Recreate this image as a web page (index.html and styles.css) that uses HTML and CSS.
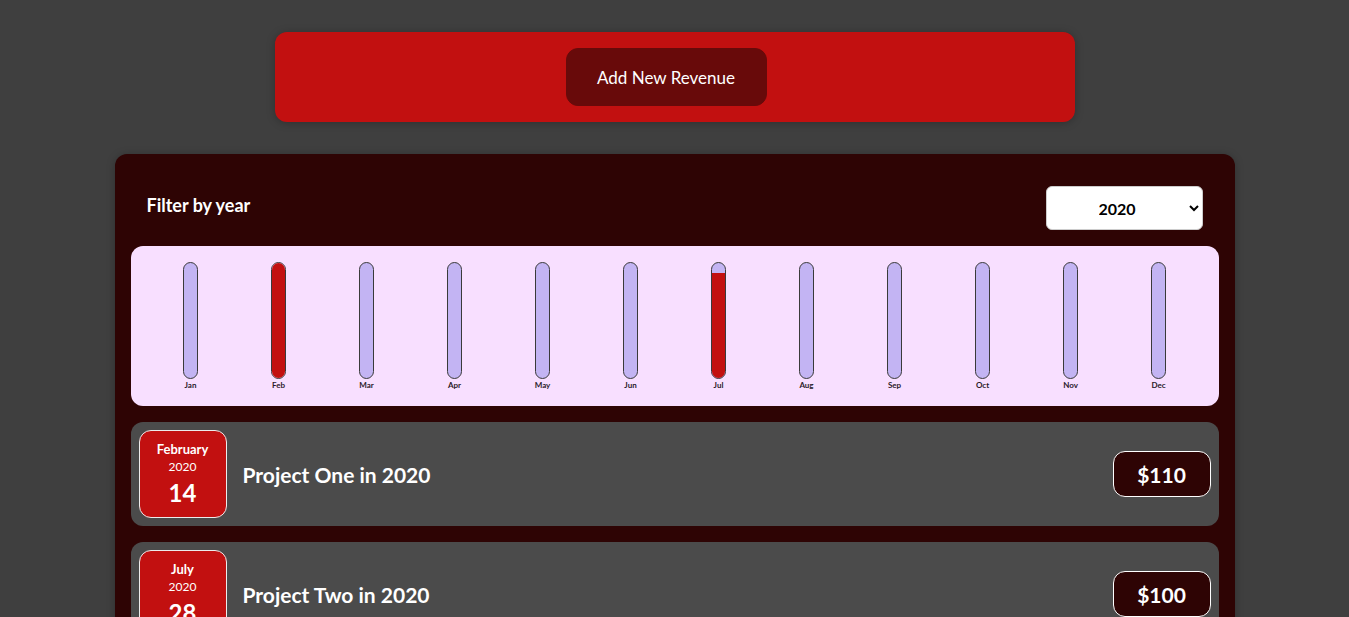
FILE: index.html
```html
<!DOCTYPE html>
<html lang="en">
<head>
<meta charset="utf-8">
<title>Expenses</title>
<link rel="stylesheet" href="styles.css">
</head>
<body>
<div class="new-expense">
  <button class="add-btn">Add New Revenue</button>
</div>

<div class="expenses">
  <div class="filter">
    <label class="filter-label">Filter by year</label>
    <select class="filter-select">
      <option>2022</option>
      <option>2021</option>
      <option selected>2020</option>
      <option>2019</option>
    </select>
  </div>

  <div class="chart">
    <div class="chart-bar"><div class="bar-inner"><div class="bar-fill" style="height:0%"></div></div><div class="bar-label">Jan</div></div>
    <div class="chart-bar"><div class="bar-inner"><div class="bar-fill" style="height:100%"></div></div><div class="bar-label">Feb</div></div>
    <div class="chart-bar"><div class="bar-inner"><div class="bar-fill" style="height:0%"></div></div><div class="bar-label">Mar</div></div>
    <div class="chart-bar"><div class="bar-inner"><div class="bar-fill" style="height:0%"></div></div><div class="bar-label">Apr</div></div>
    <div class="chart-bar"><div class="bar-inner"><div class="bar-fill" style="height:0%"></div></div><div class="bar-label">May</div></div>
    <div class="chart-bar"><div class="bar-inner"><div class="bar-fill" style="height:0%"></div></div><div class="bar-label">Jun</div></div>
    <div class="chart-bar"><div class="bar-inner"><div class="bar-fill" style="height:91%"></div></div><div class="bar-label">Jul</div></div>
    <div class="chart-bar"><div class="bar-inner"><div class="bar-fill" style="height:0%"></div></div><div class="bar-label">Aug</div></div>
    <div class="chart-bar"><div class="bar-inner"><div class="bar-fill" style="height:0%"></div></div><div class="bar-label">Sep</div></div>
    <div class="chart-bar"><div class="bar-inner"><div class="bar-fill" style="height:0%"></div></div><div class="bar-label">Oct</div></div>
    <div class="chart-bar"><div class="bar-inner"><div class="bar-fill" style="height:0%"></div></div><div class="bar-label">Nov</div></div>
    <div class="chart-bar"><div class="bar-inner"><div class="bar-fill" style="height:0%"></div></div><div class="bar-label">Dec</div></div>
  </div>

  <ul class="expense-list">
    <li class="expense-item">
      <div class="expense-date">
        <div class="date-month">February</div>
        <div class="date-year">2020</div>
        <div class="date-day">14</div>
      </div>
      <div class="expense-desc">
        <h2 class="expense-title">Project One in 2020</h2>
        <div class="expense-price">$110</div>
      </div>
    </li>
    <li class="expense-item">
      <div class="expense-date">
        <div class="date-month">July</div>
        <div class="date-year">2020</div>
        <div class="date-day">28</div>
      </div>
      <div class="expense-desc">
        <h2 class="expense-title">Project Two in 2020</h2>
        <div class="expense-price">$100</div>
      </div>
    </li>
  </ul>
</div>
</body>
</html>
```

FILE: styles.css
```css
* { box-sizing: border-box; }

html, body {
  margin: 0;
  padding: 0;
}

body {
  background: #3f3f3f;
  font-family: "Lato", "Open Sans", sans-serif;
  color: #fff;
}

.new-expense {
  width: 800px;
  margin: 32px auto;
  padding: 16px;
  background: #c21010;
  border-radius: 12px;
  text-align: center;
  box-shadow: 0 1px 8px rgba(0, 0, 0, 0.25);
}

.add-btn {
  font-family: inherit;
  font-size: 17px;
  color: #fff;
  background: #680a0a;
  border: 1px solid #680a0a;
  border-radius: 12px;
  width: 201px;
  height: 58px;
  margin-right: 17px;
  cursor: pointer;
}

.expenses {
  width: 1120px;
  margin: 32px auto;
  padding: 16px;
  background: #2e0404;
  border-radius: 12px;
  box-shadow: 0 1px 8px rgba(0, 0, 0, 0.25);
}

.filter {
  display: flex;
  align-items: center;
  justify-content: space-between;
  margin: 16px 0;
  padding: 0 16px;
}

.filter-label {
  font-weight: 700;
  font-size: 18px;
  color: #fff;
  padding-bottom: 7px;
}

.filter-select {
  width: 157px;
  height: 44px;
  padding: 0 8px 0 48px;
  font-family: inherit;
  font-size: 16px;
  font-weight: 700;
  color: #000;
  background: #fff;
  border: 1px solid #ccc;
  border-radius: 6px;
}

.chart {
  display: flex;
  justify-content: space-around;
  height: 160px;
  padding: 16px;
  background: #f8dfff;
  border-radius: 12px;
}

.chart-bar {
  flex: 1;
  display: flex;
  flex-direction: column;
  align-items: center;
  height: 100%;
}

.bar-inner {
  flex: 1;
  width: 15px;
  display: flex;
  flex-direction: column;
  justify-content: flex-end;
  background: #c3b4f3;
  border: 1px solid #3a3a3a;
  border-radius: 12px;
  overflow: hidden;
}

.bar-fill {
  width: 100%;
  background: #c21010;
}

.bar-label {
  margin-top: 1px;
  font-size: 8px;
  font-weight: 700;
  line-height: 10px;
  color: #2a1a2a;
  text-align: center;
}

.expense-list {
  list-style: none;
  margin: 0;
  padding: 0;
}

.expense-item {
  display: flex;
  align-items: center;
  gap: 16px;
  margin: 16px 0;
  padding: 8px;
  background: #4b4b4b;
  border-radius: 12px;
}

.expense-date {
  flex: none;
  width: 88px;
  height: 88px;
  display: flex;
  flex-direction: column;
  align-items: center;
  justify-content: center;
  padding-top: 2px;
  background: #c21010;
  border: 1px solid #ececec;
  border-radius: 12px;
  color: #fff;
}

.date-month {
  font-size: 13px;
  font-weight: 700;
  line-height: 16px;
  margin-top: -2px;
}

.date-year {
  font-size: 12px;
  line-height: 16px;
  margin-top: 2px;
}

.date-day {
  font-size: 24px;
  font-weight: 700;
  line-height: 30px;
  margin-top: 3px;
}

.expense-desc {
  flex: 1;
  display: flex;
  align-items: center;
  justify-content: space-between;
  gap: 16px;
}

.expense-title {
  margin: 0;
  font-size: 21px;
  font-weight: 700;
  color: #fff;
}

.expense-price {
  width: 98px;
  height: 46px;
  display: flex;
  align-items: center;
  justify-content: center;
  font-size: 21px;
  font-weight: 700;
  color: #fff;
  background: #2e0404;
  border: 1px solid #fff;
  border-radius: 12px;
}
```
